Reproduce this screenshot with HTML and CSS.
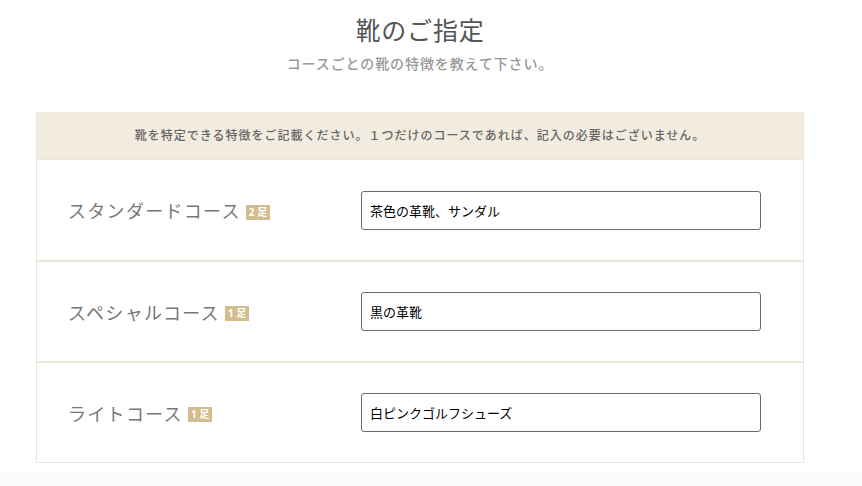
FILE: index.html
```html
<!DOCTYPE html>
<html lang="ja">
<head>
  <meta charset="UTF-8" />
  <title>靴のご指定</title>
  <link rel="stylesheet" href="styles.css">
</head>
<body>
  <div class="page">
    <h1>靴のご指定</h1>
    <p class="lead">コースごとの靴の特徴を教えて下さい。</p>

    <!-- 靴の指定フォーム -->
    <div class="shoe-box">
      <div class="shoe-note">靴を特定できる特徴をご記載ください。１つだけのコースであれば、記入の必要はございません。</div>

      <div class="shoe-row">
        <div class="course">スタンダードコース<span class="badge">2 足</span></div>
        <input class="shoe-input" type="text" value="茶色の革靴、サンダル">
      </div>

      <div class="shoe-row">
        <div class="course">スペシャルコース<span class="badge">1 足</span></div>
        <input class="shoe-input" type="text" value="黒の革靴">
      </div>

      <div class="shoe-row">
        <div class="course">ライトコース<span class="badge">1 足</span></div>
        <input class="shoe-input" type="text" value="白ピンクゴルフシューズ">
      </div>
    </div>
  </div>
  <div class="footer"></div>
</body>
</html>
```

FILE: styles.css
```css
body {
  margin: 0;
  font-family: "Noto Sans", "Noto Sans CJK JP", sans-serif;
  color: #555;
  background: #fff;
}

.page {
  width: 840px;
  padding-top: 12px;
}

h1 {
  margin: 0;
  text-align: center;
  font-weight: 400;
  font-size: 25px;
  letter-spacing: 0.8px;
  line-height: 36px;
  color: #555;
}

.lead {
  margin: 6px 0 0;
  text-align: center;
  font-size: 14px;
  letter-spacing: 0.9px;
  line-height: 20px;
  font-weight: 500;
  color: #999;
}

/* フォーム枠 */
.shoe-box {
  width: 766px;
  margin: 38px 0 0 36px;
  border: 1px solid #ede6d8;
  border-top: none;
}

.shoe-note {
  background-color: #f2ebdf;
  height: 47px;
  line-height: 47px;
  text-align: center;
  font-size: 12px;
  font-weight: 500;
  letter-spacing: 1px;
  color: #666;
}

.shoe-row {
  display: grid;
  grid-template-columns: 324px 400px;
  align-items: center;
  height: 99px;
  border-top: 2px solid #ede6d8;
}

.shoe-note + .shoe-row {
  border-top: 1px solid #ede6d8;
  height: 100px;
}

.course {
  padding-left: 31px;
  font-size: 18px;
  letter-spacing: 1.3px;
  color: #777;
  display: flex;
  align-items: center;
}

.badge {
  margin-left: 5px;
  margin-top: 4px;
  background-color: #d3bc8d;
  color: #fff;
  font-size: 10px;
  font-weight: 700;
  letter-spacing: 0;
  line-height: 15px;
  padding: 0 3px;
}

.shoe-input {
  box-sizing: border-box;
  width: 400px;
  height: 39px;
  border: 1px solid #6b6b6b;
  border-radius: 3px;
  padding: 0 8px;
  font-family: "Noto Sans CJK JP", sans-serif;
  font-size: 13px;
  color: #000;
}

.footer {
  margin-top: 10px;
  height: 20px;
  background-color: #fafafa;
}
```
